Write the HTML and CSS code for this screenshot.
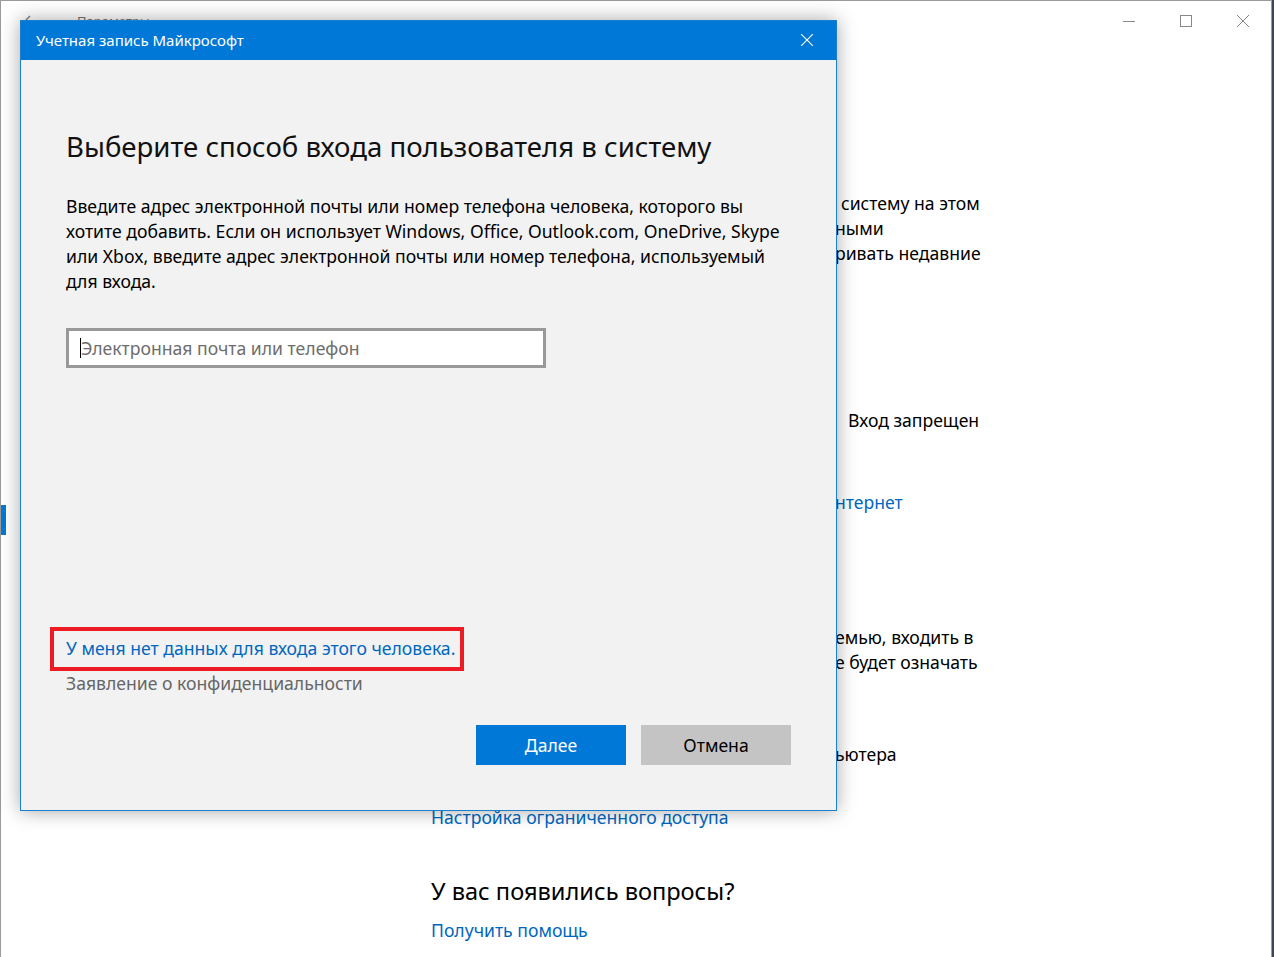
FILE: index.html
```html
<!DOCTYPE html>
<html lang="ru">
<head>
<meta charset="UTF-8" />
<title>Параметры</title>
<link rel="stylesheet" href="styles.css">
</head>
<body>

<div class="window">
  <div class="titlebar">
    <svg class="back" width="16" height="14" viewBox="0 0 16 14"><path d="M7 1 L1 7 L7 13 M1 7 H16" fill="none" stroke="#777" stroke-width="1.2"/></svg>
    <span class="app-title">Параметры</span>
    <div class="controls">
      <span class="ctl"><svg width="12" height="12" viewBox="0 0 12 12"><path d="M0 6.5 H12" stroke="#888" stroke-width="1"/></svg></span>
      <span class="ctl"><svg width="12" height="12" viewBox="0 0 12 12"><rect x="0.5" y="0.5" width="11" height="11" fill="none" stroke="#888" stroke-width="1"/></svg></span>
      <span class="ctl"><svg width="12" height="12" viewBox="0 0 12 12"><path d="M0 0 L12 12 M12 0 L0 12" stroke="#888" stroke-width="1"/></svg></span>
    </div>
  </div>
  <div class="win-body">
    <nav class="nav"><span class="nav-mark"></span></nav>
    <main class="page">
      <div class="group first">
        <div class="line tail t1">системy на этом</div>
        <div class="line tail">ными</div>
        <div class="line tail">ривать недавние</div>
      </div>
      <div class="group g2">
        <div class="line tail t2">Вход запрещен</div>
      </div>
      <div class="group g3">
        <div class="line tail link">нтернет</div>
      </div>
      <div class="group g4">
        <div class="line tail">емью, входить в</div>
        <div class="line tail">е будет означать</div>
      </div>
      <div class="group g5">
        <div class="line tail">ьютера</div>
      </div>
      <div class="group g6">
        <div class="line link">Настройка ограниченного доступа</div>
      </div>
      <h2 class="help-title">У вас появились вопросы?</h2>
      <div class="line link help-link">Получить помощь</div>
    </main>
  </div>
</div>

<div class="dialog">
  <div class="dlg-head">
    <span>Учетная запись Майкрософт</span>
    <svg width="12" height="12" viewBox="0 0 12 12"><path d="M0 0 L12 12 M12 0 L0 12" stroke="#fff" stroke-width="1.1"/></svg>
  </div>
  <div class="dlg-body">
    <h1>Выберите способ входа пользователя в систему</h1>
    <p class="intro">Введите адрес электронной почты или номер телефона человека, которого вы хотите добавить. Если он использует Windows, Office, Outlook.com, OneDrive, Skype или Xbox, введите адрес электронной почты или номер телефона, используемый для входа.</p>
    <div class="field"><span class="caret"></span><span class="placeholder">Электронная почта или телефон</span></div>
    <div class="spacer"></div>
    <div class="links">
      <div><a class="no-account">У меня нет данных для входа этого человека.</a></div>
      <div class="privacy">Заявление о конфиденциальности</div>
    </div>
    <div class="actions">
      <button class="primary">Далее</button>
      <button class="secondary">Отмена</button>
    </div>
  </div>
</div>

</body>
</html>
```

FILE: styles.css
```css
body {
  margin: 0;
  width: 1274px;
  height: 957px;
  overflow: hidden;
  background: #3b4756;
  font-family: "Noto Sans", "Open Sans", sans-serif;
  color: #000;
}
.window {
  box-sizing: border-box;
  width: 1272px;
  height: 957px;
  background: #fff;
  border: 1px solid #9a9a9a;
  border-bottom: none;
}
.titlebar {
  display: flex;
  align-items: center;
  height: 39px;
}
.back {
  margin-left: 22px;
  margin-top: 2px;
}
.app-title {
  margin-left: 38px;
  font-size: 13px;
  color: #777;
}
.controls {
  margin-left: auto;
  display: flex;
}
.ctl {
  width: 57px;
  height: 39px;
  display: flex;
  align-items: center;
  justify-content: center;
}
.win-body {
  display: flex;
}
.nav {
  width: 320px;
  padding-top: 465px;
}
.nav-mark {
  display: block;
  width: 5px;
  height: 30px;
  background: #0078d7;
}
.page {
  padding-left: 110px;
  padding-top: 151px;
  font-size: 17.6px;
}
.line {
  line-height: 25px;
  white-space: nowrap;
}
.tail {
  padding-left: 404px;
}
.tail.t1 {
  padding-left: 410px;
}
.tail.t2 {
  padding-left: 417px;
}
.link {
  color: #0067c0;
}
.g2 { margin-top: 142px; }
.g3 { margin-top: 57px; }
.g4 { margin-top: 110px; }
.g5 { margin-top: 67px; }
.g6 { margin-top: 38px; }
.help-title {
  margin: 46px 0 0;
  font-size: 23.6px;
  font-weight: 400;
  line-height: 30px;
}
.help-link {
  margin-top: 12px;
}

/* dialog */
.dialog {
  position: absolute;
  left: 20px;
  top: 20px;
  box-sizing: border-box;
  width: 817px;
  height: 791px;
  border: 1px solid #1b7fd0;
  background: #f2f2f2;
  box-shadow: 0 0 18px rgba(0, 0, 0, 0.35);
  display: flex;
  flex-direction: column;
}
.dlg-head {
  height: 39px;
  background: #0078d7;
  color: #fff;
  display: flex;
  align-items: center;
  justify-content: space-between;
  padding: 0 23px 2px 15px;
  box-sizing: border-box;
  font-size: 15px;
}
.dlg-body {
  flex: 1;
  display: flex;
  flex-direction: column;
  padding: 0 45px 45px;
}
.dlg-body h1 {
  margin: 66px 0 0;
  font-size: 27.6px;
  font-weight: 400;
  line-height: 40px;
  color: #111;
}
.intro {
  margin: 28px 0 0;
  font-size: 17.6px;
  line-height: 25px;
  width: 720px;
}
.field {
  margin-top: 34px;
  box-sizing: border-box;
  width: 480px;
  height: 40px;
  border: 3px solid #999;
  background: #fff;
  display: flex;
  align-items: center;
  padding-left: 11px;
  font-size: 17.6px;
}
.caret {
  width: 1px;
  height: 20px;
  background: #000;
}
.placeholder {
  color: #6d6d6d;
}
.spacer {
  flex: 1;
}
.links {
  font-size: 17.6px;
  line-height: 25px;
}
.no-account {
  display: inline-block;
  color: #0067c0;
  padding: 5px 5px 6px 12px;
  margin: -5px -5px -6px -12px;
  outline: 4px solid #ed1c24;
}
.privacy {
  margin-top: 10px;
  color: #666;
}
.actions {
  display: flex;
  justify-content: flex-end;
  gap: 15px;
  margin-top: 29px;
}
.actions button {
  width: 150px;
  height: 40px;
  border: none;
  font-family: inherit;
  font-size: 17.6px;
}
.primary {
  background: #0078d7;
  color: #fff;
}
.secondary {
  background: #c4c4c4;
  color: #000;
}
```
